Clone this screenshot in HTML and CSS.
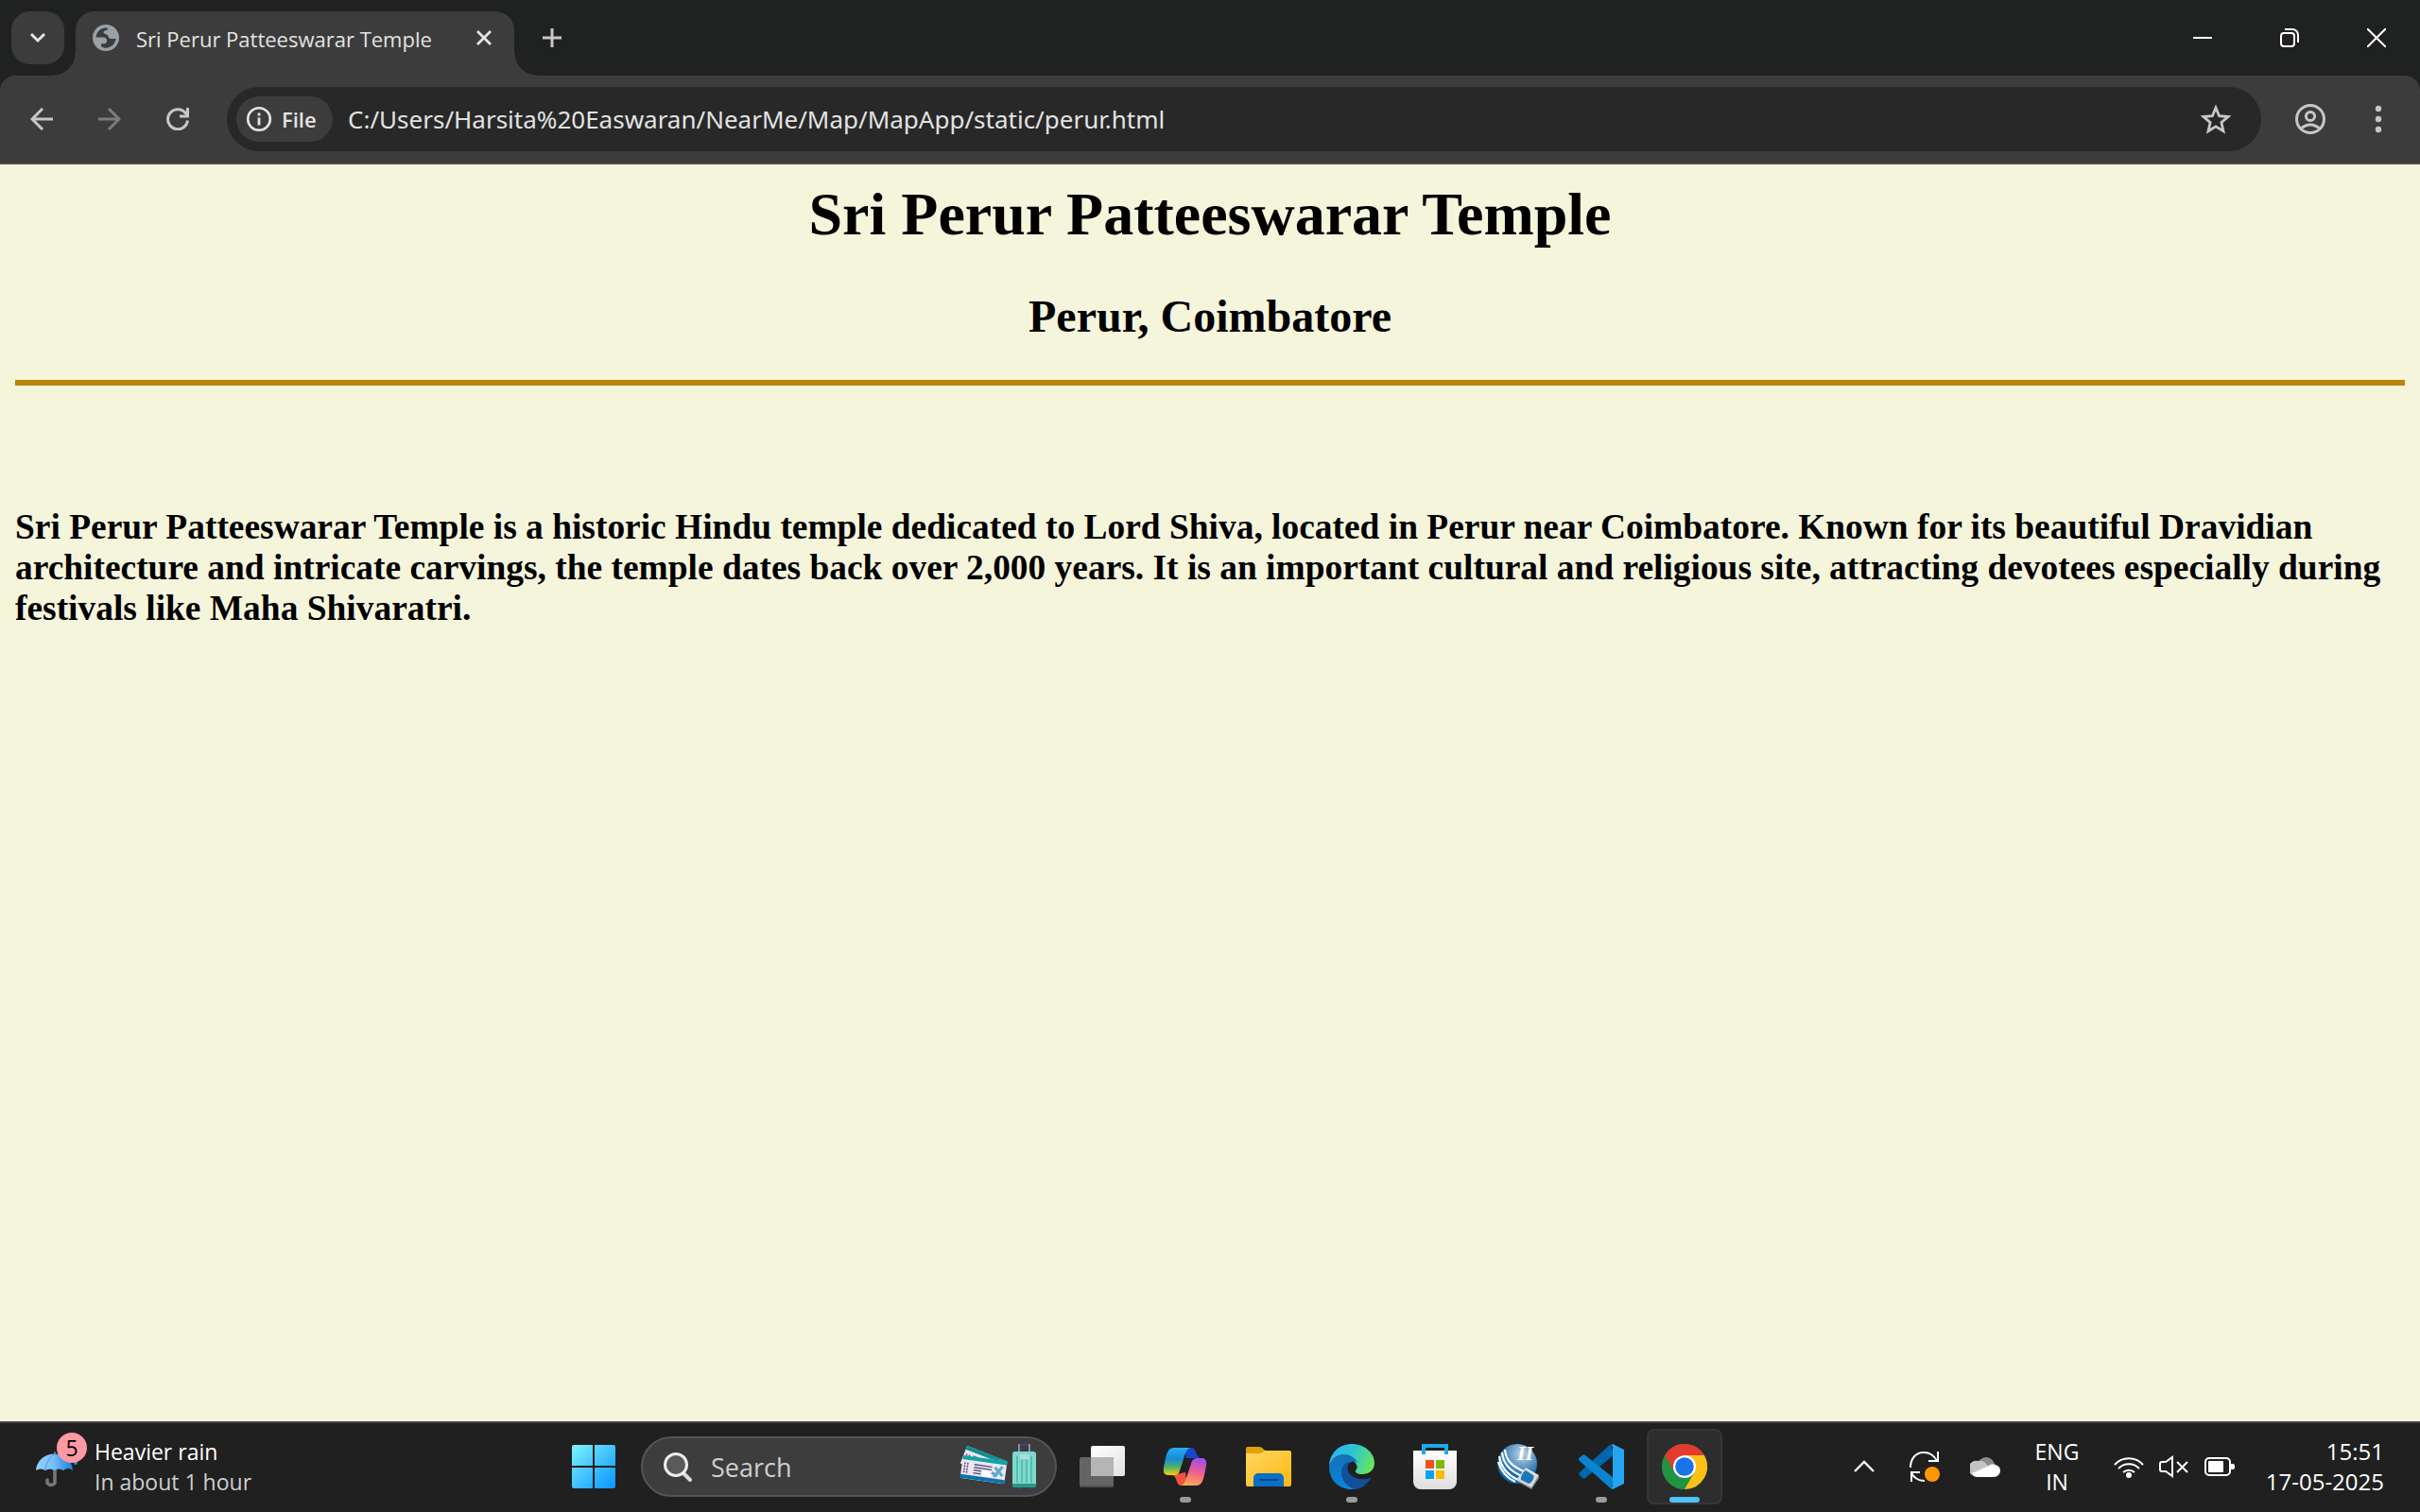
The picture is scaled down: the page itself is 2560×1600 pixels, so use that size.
FILE: index.html
```html
<!DOCTYPE html>
<html lang="en">
<head>
<meta charset="utf-8">
<title>Sri Perur Patteeswarar Temple</title>
<link rel="stylesheet" href="styles.css">
</head>
<body>
<header class="browser">
  <div class="tabstrip">
    <button class="tab-search" aria-label="Search tabs">
      <svg width="20" height="14" viewBox="0 0 20 14"><path d="M3 3l7 7 7-7" fill="none" stroke="#e3e3e3" stroke-width="3"/></svg>
    </button>
    <div class="tab">
      <svg class="favicon" width="28" height="28" viewBox="0 0 28 28"><circle cx="14" cy="14" r="14" fill="#9aa0a6"/><path d="M3.500 13.500C4 8 8.500 3.500 14.500 3.300l2 1.500C15 6.500 11.500 6 11.500 8.500c0 2 4.500 1 5 4 .3 2 1.500 2.500 4 2.500h4C24 20 20 24.500 14 24.700c-2 0-4-.7-5-1.500v-3h3c2.500 0 3-1 3-3 0-3-2-3.700-4-3.700z" fill="#3c3c3c"/></svg>
      <span class="tab-title">Sri Perur Patteeswarar Temple</span>
      <button class="plain" aria-label="Close tab"><svg width="16" height="16" viewBox="0 0 16 16"><path d="M1 1l14 14M15 1L1 15" stroke="#e3e3e3" stroke-width="2.800"/></svg></button>
    </div>
    <button class="plain new-tab" aria-label="New tab"><svg width="20" height="20" viewBox="0 0 20 20"><path d="M10 0v20M0 10h20" stroke="#c7c7c7" stroke-width="3"/></svg></button>
    <div class="window-controls">
      <button aria-label="Minimize"><svg width="20" height="20" viewBox="0 0 20 20"><path d="M0 10h20" stroke="#fff" stroke-width="2"/></svg></button>
      <button aria-label="Restore"><svg width="20" height="20" viewBox="0 0 20 20" fill="none" stroke="#fff" stroke-width="2"><rect x="1" y="5" width="14" height="14" rx="3"/><path d="M5 1h8a6 6 0 0 1 6 6v8"/></svg></button>
      <button aria-label="Close"><svg width="20" height="20" viewBox="0 0 20 20"><path d="M0 0l20 20M20 0L0 20" stroke="#fff" stroke-width="2"/></svg></button>
    </div>
  </div>
  <div class="toolbar">
    <button class="nav" aria-label="Back"><svg width="24" height="24" viewBox="0 0 24 24" fill="none" stroke="#c7c7c7" stroke-width="3"><path d="M24 12H2M13 1L2 12l11 11"/></svg></button>
    <button class="nav" aria-label="Forward"><svg width="24" height="24" viewBox="0 0 24 24" fill="none" stroke="#7c7c7c" stroke-width="3"><path d="M0 12h22M11 1l11 11-11 11"/></svg></button>
    <button class="nav" aria-label="Reload"><svg width="24" height="24" viewBox="0 0 24 24" fill="none" stroke="#c7c7c7" stroke-width="3"><path d="M22.500 13.500A10.500 10.500 0 1 1 20 5.300L22.500 8M22.500 0v9H14"/></svg></button>
    <div class="omnibox">
      <button class="chip"><svg width="28" height="28" viewBox="0 0 28 28"><circle cx="14" cy="14" r="11.800" fill="none" stroke="#e3e3e3" stroke-width="2.600"/><path d="M14 12.500v8M14 7.500v3" stroke="#e3e3e3" stroke-width="2.800"/></svg>File</button>
      <input class="url" aria-label="Address" value="C:/Users/Harsita%20Easwaran/NearMe/Map/MapApp/static/perur.html">
      <button class="plain" aria-label="Bookmark"><svg width="32" height="32" viewBox="0 0 32 32"><path d="M16 4l3.600 8.700 9.400.8-7.100 6.100 2.100 9.200-8-4.900-8 4.900 2.100-9.200L3 13.500l9.400-.8z" fill="none" stroke="#c7c7c7" stroke-width="2.800"/></svg></button>
    </div>
    <button class="nav" aria-label="Profile"><svg width="32" height="32" viewBox="0 0 32 32" fill="none" stroke="#c7c7c7" stroke-width="3"><circle cx="16" cy="16" r="14.500"/><circle cx="16" cy="13" r="4.600"/><path d="M6.500 26c5-5.500 14-5.500 19 0"/></svg></button>
    <button class="nav" aria-label="Menu"><svg width="32" height="32" viewBox="0 0 32 32" fill="#c7c7c7"><circle cx="16" cy="5" r="3.200"/><circle cx="16" cy="16" r="3.200"/><circle cx="16" cy="27" r="3.200"/></svg></button>
  </div>
</header>

<main class="page">
  <h1>Sri Perur Patteeswarar Temple</h1>
  <h2>Perur, Coimbatore</h2>
  <hr>
  <h3>Sri Perur Patteeswarar Temple is a historic Hindu temple dedicated to Lord Shiva, located in Perur near Coimbatore. Known for its beautiful Dravidian architecture and intricate carvings, the temple dates back over 2,000 years. It is an important cultural and religious site, attracting devotees especially during festivals like Maha Shivaratri.</h3>
</main>

<footer class="taskbar">
  <button class="weather">
    <span class="umbrella">
      <svg width="44" height="40" viewBox="0 0 44 40"><defs><linearGradient id="um" x1="0" x2="1"><stop offset="0" stop-color="#8fd0ff"/><stop offset=".45" stop-color="#7cc0fb"/><stop offset="1" stop-color="#1b7fd8"/></linearGradient></defs><path d="M20 18v15a4.500 4.500 0 0 1-8 0v-3" fill="none" stroke="#7a7574" stroke-width="3.600" stroke-linecap="round"/><path d="M20 0v4" stroke="#666" stroke-width="2"/><path d="M0 20C1 9 9 2.500 20 2.500S38 9 39 20c-4-3-7-2.500-10 0-3-2-6-2-9.500 0-3-2-6-2-9.500 0-3-2-6-2-10 0z" fill="url(#um)"/><path d="M10 20c1-8 4-14 10-17.500C26 6 28 12 29 20" fill="none" stroke="#4c9ade" stroke-width="1"/><circle cx="42" cy="12" r="2" fill="#2687dc"/></svg>
      <span class="badge">5</span>
    </span>
    <span class="weather-text">Heavier rain<br><span class="dim">In about 1 hour</span></span>
  </button>

  <nav class="apps">
    <button class="app" aria-label="Start"><svg width="46" height="46" viewBox="0 0 46 46"><defs><linearGradient id="win" x1="0" y1="0" x2="1" y2="1"><stop offset="0" stop-color="#7df3ff"/><stop offset="1" stop-color="#0a93ff"/></linearGradient></defs><path d="M2 0h20v22H0V2a2 2 0 0 1 2-2zM24 0h20a2 2 0 0 1 2 2v20H24zM0 24h22v22H2a2 2 0 0 1-2-2zM24 24h22v20a2 2 0 0 1-2 2H24z" fill="url(#win)"/></svg></button>
    <label class="search">
      <svg width="30" height="32" viewBox="0 0 30 32"><path d="M20 22l8 8" stroke="#d8dcde" stroke-width="4" stroke-linecap="round"/><circle cx="13" cy="14" r="11.500" fill="#5a5a5a" stroke="#eceff0" stroke-width="3"/></svg>
      <input type="text" placeholder="Search" aria-label="Search">
      <svg width="84" height="50" viewBox="0 0 84 50"><g transform="translate(9 3) rotate(21)"><rect width="44" height="20" rx="1" fill="#ece7f0"/><path d="M0 0h44v4H0z" fill="#0b8f94"/><path d="M3 8v9M6 8v9M10 8h14M10 11h10" stroke="#5b4c86" stroke-width="1.500"/></g><g transform="translate(5 13) rotate(8)"><rect width="47" height="24" rx="1" fill="#ece7f0"/><path d="M0 0h47v4H0z" fill="#0da5a6"/><path d="M0 20h47v4H0z" fill="#0873b0"/><path d="M3 7v11M6 7v11" stroke="#5b4c86" stroke-width="1.600" stroke-dasharray="2 1"/><path d="M13 8h19M13 11h19M13 14h8M13 17h8" stroke="#5b4c86" stroke-width="1.400"/><path d="M23 13h9v6h-9z" fill="#fff"/><path d="M35 8l9 8M43 6l-8 12M32 14l7 2" stroke="#5aabd0" stroke-width="3"/></g><path d="M64 11V2h11v9" fill="none" stroke="#8290a4" stroke-width="2"/><path d="M65 2h9" stroke="#443b72" stroke-width="3"/><path d="M62 48h4M75 48h4" stroke="#443b8a" stroke-width="2"/><rect x="57" y="9" width="25" height="38" rx="3" fill="#7cdacd"/><path d="M57 43h25v1a3 3 0 0 1-3 3H60a3 3 0 0 1-3-3z" fill="#299987"/><path d="M62 14v28M67 18v24M72 18v24M77 14v28" stroke="#4bb0a5" stroke-width="1.400"/><path d="M65 12h10v5H65z" fill="#a9dfdb"/></svg>
    </label>
    <button class="app" aria-label="Task view"><svg width="48" height="44" viewBox="0 0 48 44"><defs><linearGradient id="tv" x1="0" y1="0" x2="1" y2="1"><stop offset="0" stop-color="#fff"/><stop offset="1" stop-color="#e2e2e2"/></linearGradient></defs><rect x="12" width="36" height="32" rx="2" fill="url(#tv)"/><rect y="12" width="36" height="32" rx="2" fill="#646464"/><path d="M12 12h22a2 2 0 0 1 2 2v18H12z" fill="#b5b5b5"/><path d="M0 42h36a2 2 0 0 1-2 2H2a2 2 0 0 1-2-2z" fill="#4d4d4d"/></svg></button>
    <button class="app running" aria-label="Copilot"><svg width="48" height="48" viewBox="0 0 48 48"><defs><linearGradient id="c1" x1="0" y1="0" x2="0" y2="1"><stop offset="0" stop-color="#27b0f4"/><stop offset=".4" stop-color="#1689dc"/><stop offset=".7" stop-color="#4fb167"/><stop offset="1" stop-color="#ffcb0f"/></linearGradient><linearGradient id="c2" x1=".5" y1="0" x2=".3" y2="1"><stop offset="0" stop-color="#a64bec"/><stop offset=".5" stop-color="#f0608c"/><stop offset="1" stop-color="#ffad55"/></linearGradient></defs><path d="M22 4h9c4 0 5 11 9 11H25z" fill="#1648cc"/><path d="M26 44h-7c-5 0-4-11-9-11l14-3z" fill="#f2533c"/><path d="M12 4h17c-4 2-5 5-7 12l-4 12c-1 4-3 5-7 5H6c-6 0-6-5-4-13C4 9 6 4 12 4z" fill="url(#c1)"/><path d="M36 44H20c3-2 4-5 6-11l4-12c1-4 3-6 7-6h4c6 0 6 5 4 13-2 11-4 16-9 16z" fill="url(#c2)"/></svg></button>
    <button class="app" aria-label="File Explorer"><svg width="48" height="42" viewBox="0 0 48 42"><defs><linearGradient id="fo" x1="0" y1="0" x2="1" y2="1"><stop offset="0" stop-color="#ffd766"/><stop offset="1" stop-color="#fbb90d"/></linearGradient></defs><path d="M0 10V2a2 2 0 0 1 2-2h12c4 0 4 4 8 4v6z" fill="#e2a100"/><path d="M0 7h15c3 0 3-3 7-3h24a2 2 0 0 1 2 2v34a2 2 0 0 1-2 2H2a2 2 0 0 1-2-2z" fill="url(#fo)"/><path d="M8 42V33a5 5 0 0 1 5-5h22a5 5 0 0 1 5 5v9z" fill="#0a6fc5"/><path d="M14 35h20" stroke="#064a91" stroke-width="2"/></svg></button>
    <button class="app running" aria-label="Edge"><svg width="48" height="48" viewBox="0 0 48 48"><defs><linearGradient id="e1" x1="0" y1=".3" x2="1" y2=".6"><stop offset="0" stop-color="#2fb3f3"/><stop offset=".5" stop-color="#2ec5cf"/><stop offset="1" stop-color="#6be75a"/></linearGradient><linearGradient id="e2" x1="0" y1="0" x2="0" y2="1"><stop offset="0" stop-color="#166fb4"/><stop offset="1" stop-color="#0a86e0"/></linearGradient></defs><path d="M0 23C1 9 11 0 24 0s24 9 24 20c0 8-6 12-13 12-5 0-8-2-7-4 2-2 2-4 1-6-1-3-4-5-8-6C12 12 4 15 0 23z" fill="url(#e1)"/><path d="M0 24C2 16 8 11 15 11c8 0 14 5 15 9-4-3-10-1-11 5 0 12 9 18 20 15-4 5-9 8-15 8C10 48 0 38 0 24z" fill="url(#e2)"/><path d="M13 30c0-5 3-11 9-11-4 4-3 10 1 14 6 5 14 5 20 3 1 0 1 1 0 2-4 6-9 9-15 10C19 46 13 38 13 30z" fill="#114f9b"/></svg></button>
    <button class="app" aria-label="Microsoft Store"><svg width="46" height="48" viewBox="0 0 46 48"><defs><linearGradient id="st" x1="0" y1="0" x2="0" y2="1"><stop offset="0" stop-color="#fff"/><stop offset="1" stop-color="#dedede"/></linearGradient></defs><path d="M0 7h46v33a8 8 0 0 1-8 8H8a8 8 0 0 1-8-8z" fill="url(#st)"/><path d="M11 11V2h24v9" fill="none" stroke="#1ba8ec" stroke-width="4"/><path d="M13 17h9v9h-9z" fill="#f25022"/><path d="M24 17h9v9h-9z" fill="#7fba00"/><path d="M13 28h9v9h-9z" fill="#00a4ef"/><path d="M24 28h9v9h-9z" fill="#ffb900"/></svg></button>
    <button class="app" aria-label="Quartus"><svg width="48" height="48" viewBox="0 0 48 48"><defs><radialGradient id="qu" cx=".62" cy=".25" r=".6"><stop offset="0" stop-color="#c3d6e8"/><stop offset="1" stop-color="#0d67aa"/></radialGradient></defs><circle cx="23" cy="21" r="21" fill="url(#qu)"/><g fill="none" stroke="#fff" stroke-width="2.200"><path d="M10 6c1 12 8 18 22 24"/><path d="M7 9c1 13 9 20 21 25"/><path d="M4 13c2 13 9 20 20 25"/><path d="M3 19c3 11 9 17 18 21"/></g><text x="23" y="17" class="quartus-mark">II</text><path d="M32 25l14 8-8 14-16-9z" fill="#d9dcdf"/><path d="M46 33v3l-8 12-16-9v-1l16 8z" fill="#8d9195"/><path d="M32 28l8 5c2 2-2 9-5 9l-8-4c-1-2 2-9 5-10z" fill="#1c78b4"/></svg></button>
    <button class="app running" aria-label="Visual Studio Code"><svg width="48" height="48" viewBox="0 0 48 48"><path d="M34 0l3 12L7 36c-1 1-2 1-3 0l-3-3c-1-1-1-2 0-3z" fill="#0067ad"/><path d="M0 15l4-3c1-1 2-1 3 0l30 24-2 12L1 18c-1-1-1-2-1-3z" fill="#0a84d0"/><path d="M36 0l12 6v36l-12 6c-2-1-1-2 0-3V3c-1-1-2-2 0-3z" fill="#26a5f1"/></svg></button>
    <button class="app running active" aria-label="Chrome"><svg width="48" height="48" viewBox="0 0 48 48"><circle cx="24" cy="24" r="24" fill="#229342"/><path d="M24 24L3.200 12A24 24 0 0 1 44.800 12z" fill="#e33b2e"/><path d="M24 12h20.800A24 24 0 0 1 24 48l10.400-18z" fill="#fbc116"/><path d="M3.200 12L13.600 30 24 12z" fill="#e33b2e"/><circle cx="24" cy="24" r="12" fill="#fff"/><circle cx="24" cy="24" r="9.800" fill="#1a73e8"/></svg></button>
  </nav>

  <div class="tray">
    <button class="tray-item" aria-label="Hidden icons"><svg width="24" height="16" viewBox="0 0 24 16"><path d="M2 13L12 3l10 10" fill="none" stroke="#fff" stroke-width="2.400"/></svg></button>
    <button class="tray-item" aria-label="Updates"><svg width="34" height="34" viewBox="0 0 34 34" fill="none" stroke="#fff" stroke-width="2"><path d="M2 18C2 8 8 2 16 2c6 0 11 3 14 9M31 1v10H21M17 32C11 32 6 29 3 24M3 33V23h9"/><circle cx="25" cy="25" r="8" fill="#ff9800" stroke="none"/></svg></button>
    <button class="tray-item" aria-label="OneDrive"><svg width="32" height="22" viewBox="0 0 32 22"><circle cx="17" cy="10" r="9" fill="#8d8d8d"/><path d="M8 5c6-1 10 3 12 7L5 21a8 8 0 0 1 3-16z" fill="#c4c4c4"/><path d="M20 10c3-3 12-1 12 5 0 4-3 7-7 7H8c-3 0-5-1-6-4z" fill="#fff"/></svg></button>
    <button class="lang">ENG<br>IN</button>
    <button class="status" aria-label="Network, sound and battery">
      <svg width="32" height="24" viewBox="0 0 32 24" fill="none" stroke="#fff" stroke-width="2"><path d="M1 10a20 20 0 0 1 30 0M5 14a15 15 0 0 1 22 0M10 18a9 9 0 0 1 12 0"/><circle cx="16" cy="21" r="3" fill="#fff" stroke="none"/></svg>
      <svg width="32" height="24" viewBox="0 0 32 24" fill="none" stroke="#fff" stroke-width="2"><path d="M14 2v20l-7-5H3a2 2 0 0 1-2-2V9a2 2 0 0 1 2-2h4zM19 7l11 11M30 7L19 18"/></svg>
      <svg width="32" height="24" viewBox="0 0 32 24"><rect x="1" y="3" width="26" height="18" rx="4" fill="none" stroke="#fff" stroke-width="2"/><rect x="4" y="6" width="16" height="12" rx="1" fill="#fff"/><path d="M28 9h2a2 2 0 0 1 2 2v2a2 2 0 0 1-2 2h-2z" fill="#fff"/></svg>
    </button>
    <button class="clock">15:51<br>17-05-2025</button>
  </div>
</footer>
</body>
</html>
```
FILE: styles.css
```css
* { box-sizing: border-box; }

body {
  margin: 0;
  min-height: 100vh;
  display: flex;
  flex-direction: column;
  background: #f5f5dc;
  font-family: "Open Sans", "Noto Sans", sans-serif;
  font-size: 23px;
  line-height: 32px;
}

button, input {
  margin: 0;
  padding: 0;
  border: 0;
  background: none;
  color: inherit;
  font: inherit;
}

svg { display: block; flex: none; }

.browser { background: #202221; color: #e3e3e3; }

.tabstrip {
  display: flex;
  align-items: center;
  height: 80px;
  padding-left: 12px;
}

.tab-search {
  display: flex;
  align-items: center;
  justify-content: center;
  width: 56px;
  height: 56px;
  margin-right: 12px;
  border-radius: 20px;
  background: #3c3c3c;
}

.tab {
  position: relative;
  display: flex;
  align-items: center;
  align-self: flex-end;
  width: 464px;
  height: 68px;
  padding: 0 24px 12px 18px;
  border-radius: 20px 20px 0 0;
  background: #3c3c3c;
}

/* curved feet that join the tab to the toolbar */
.tab::before, .tab::after {
  content: "";
  position: absolute;
  bottom: 0;
  width: 24px;
  height: 24px;
}
.tab::before { right: 100%; background: radial-gradient(circle at 0 0, transparent 23px, #3c3c3c 24px); }
.tab::after { left: 100%; background: radial-gradient(circle at 100% 0, transparent 23px, #3c3c3c 24px); }

.tab-title { flex: 1; padding: 2px 0 0 18px; font-size: 22px; white-space: nowrap; }

.plain { display: flex; align-items: center; justify-content: center; }

.new-tab { margin-left: 30px; }

.window-controls { display: flex; align-self: stretch; margin-left: auto; }
.window-controls button { display: flex; align-items: center; justify-content: center; width: 92px; }

.toolbar {
  display: flex;
  align-items: center;
  height: 94px;
  padding: 0 8px;
  border-bottom: 2px solid #4a4a4a;
  border-radius: 16px 16px 0 0;
  background: #3c3c3c;
}

.nav { display: flex; align-items: center; justify-content: center; width: 72px; height: 68px; }

.omnibox {
  flex: 1;
  display: flex;
  align-items: center;
  height: 68px;
  margin: 0 16px;
  padding: 0 32px 0 10px;
  border-radius: 34px;
  background: #282828;
}

.chip {
  display: flex;
  align-items: center;
  gap: 10px;
  width: 102px;
  height: 48px;
  padding-left: 10px;
  border-radius: 24px;
  background: #3c3c3c;
  font-weight: 600;
  font-size: 22px;
}

.url { flex: 1; min-width: 0; padding-left: 16px; font-family: "Noto Sans", sans-serif; font-size: 26px; }

.page {
  flex: 1;
  padding: 16px;
  color: #000;
  font-family: "Liberation Serif", "Times New Roman", serif;
  font-size: 32px;
}

h1 { margin: 0 0 43px; font-size: 64px; line-height: 74px; text-align: center; }
h2 { margin: 0 0 39px; font-size: 48px; line-height: 56px; text-align: center; }
hr { height: 6px; margin: 0; border: 0; background: #b8860b; }
h3 { margin: 128px 0 0; line-height: 43px; }

.taskbar {
  display: flex;
  align-items: center;
  height: 96px;
  background: #202020;
  box-shadow: inset 0 2px #454545;
  color: #fff;
}

.weather {
  flex: 0 0 588px;
  display: flex;
  align-items: center;
  padding-left: 38px;
  text-align: left;
}

.umbrella { position: relative; padding-top: 8px; }

.badge {
  position: absolute;
  top: -12px;
  left: 22px;
  width: 32px;
  height: 32px;
  border-radius: 16px;
  background: #ff99a4;
  color: #000;
  text-align: center;
}

.weather-text { padding-left: 18px; }
.dim { color: #cfcfcf; }

.apps { display: flex; align-items: center; gap: 8px; }

.app {
  position: relative;
  display: flex;
  align-items: center;
  justify-content: center;
  width: 80px;
  height: 80px;
  border-radius: 8px;
}

.running::after {
  content: "";
  position: absolute;
  bottom: 2px;
  width: 12px;
  height: 6px;
  border-radius: 3px;
  background: #9a9a9a;
}

.active { background: #2d2d2d; box-shadow: inset 0 0 0 2px #363636; }
.active::after { width: 32px; background: #4cc2ff; }

.search {
  display: flex;
  align-items: center;
  width: 440px;
  height: 64px;
  margin-left: 2px;
  padding: 0 18px 0 22px;
  border: 2px solid #555;
  border-radius: 32px;
  background: #3d3d3d;
  font-size: 27px;
}
.search input { flex: 1; min-width: 0; padding: 2px 0 0 20px; }
.search input::placeholder { color: #cfcfcf; opacity: 1; }

.quartus-mark { fill: #fff; font: italic bold 22px "Liberation Serif", serif; }

.tray {
  display: flex;
  align-items: center;
  margin-left: auto;
  padding-right: 38px;
}
.tray-item { display: flex; align-items: center; justify-content: center; width: 64px; }
.lang { width: 88px; text-align: center; }
.status { display: flex; gap: 16px; margin: 0 16px; }
.clock { width: 142px; font-size: 24px; text-align: right; }
```
